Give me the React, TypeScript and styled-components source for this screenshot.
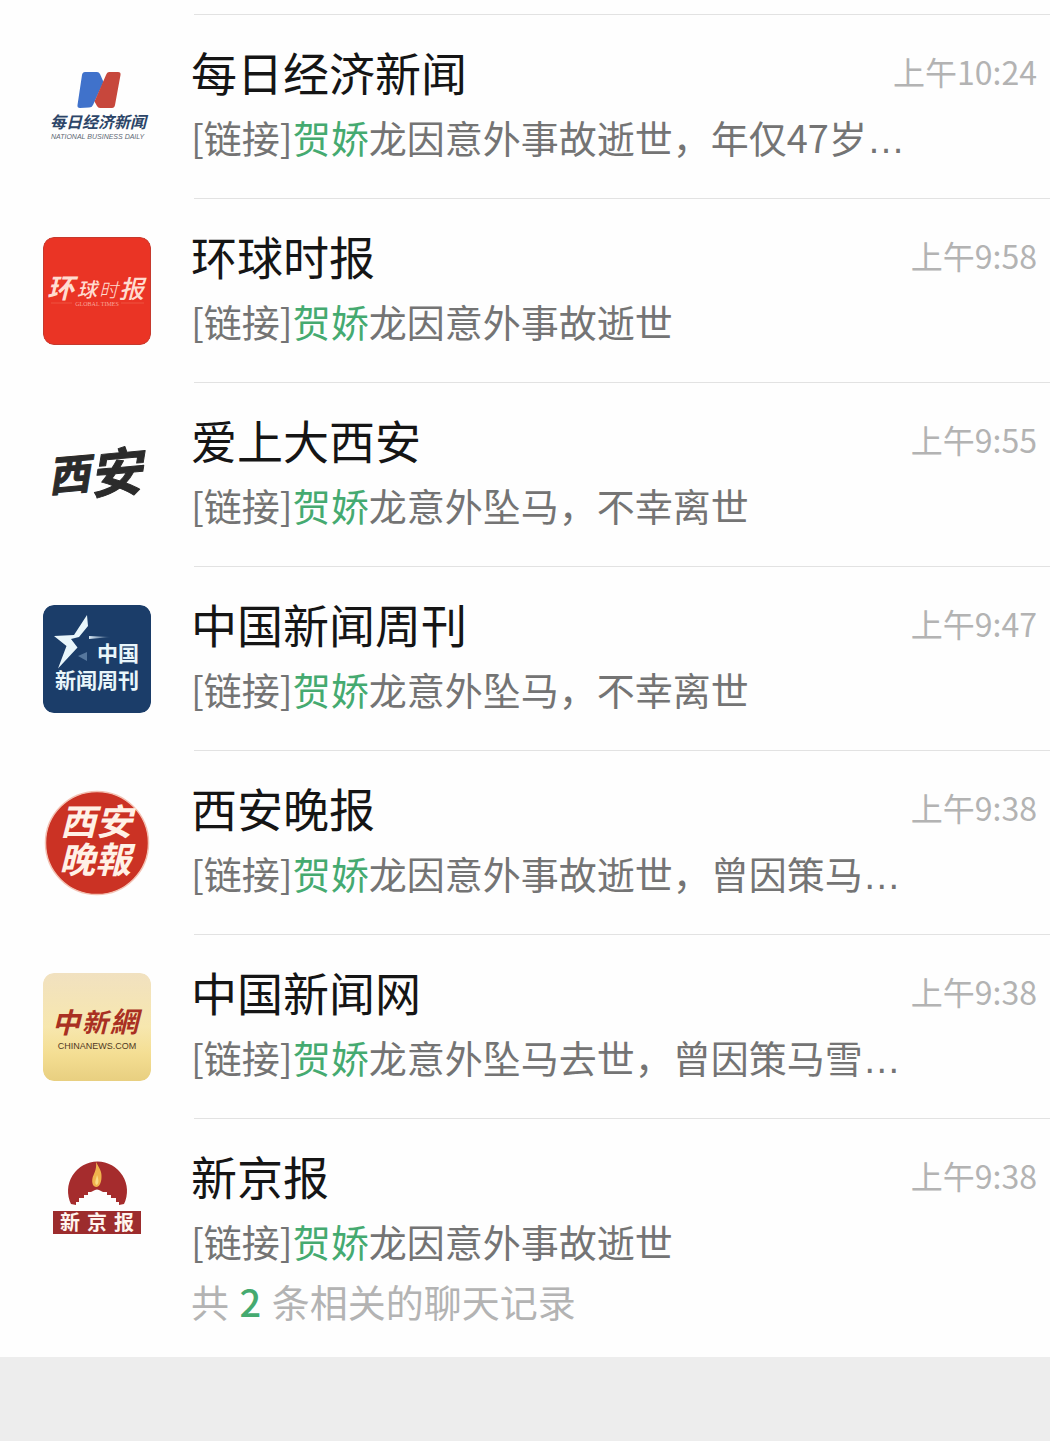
import React from "react";
import styled, { createGlobalStyle } from "styled-components";

const cjk = `"Noto Sans CJK SC", "Noto Sans", sans-serif`;

const GlobalStyle = createGlobalStyle`
  body {
    margin: 0;
    background: #ededed;
    font-family: ${cjk};
  }
`;

const Results = styled.ul`
  list-style: none;
  margin: 0;
  padding: 14px 0 0;
  background: #fefefe;
`;

const Row = styled.a`
  display: flex;
  padding-left: 43px;
  color: inherit;
  text-decoration: none;
`;

const Avatar = styled.svg`
  flex: none;
  width: 108px;
  height: 108px;
  margin-top: 39px;
  border-radius: 11px;
`;

const Body = styled.div<{ $tall?: boolean }>`
  flex: 1;
  min-width: 0;
  margin-left: 43px;
  padding: 28px 13px ${(p) => (p.$tall ? "34px" : "37px")} 0;
  border-top: 1px solid #e2e2e2;
  display: flex;
  flex-direction: column;
  gap: 14px;
`;

const Head = styled.div`
  display: flex;
  align-items: center;
  justify-content: space-between;
  gap: 24px;
  margin-left: -3px;
`;

const Title = styled.span`
  font-size: 46px;
  line-height: 56px;
  color: #151515;
`;

const Time = styled.time`
  flex: none;
  font-size: 32px;
  line-height: 48px;
  color: #b3b3b3;
`;

const Line = styled.span`
  margin-left: -3px;
  font-size: 38px;
  line-height: 48px;
  white-space: nowrap;
  color: #747474;
`;

const CountLine = styled(Line)`
  line-height: 44px;
  color: #b3b3b3;
`;

const Match = styled.em`
  font-style: normal;
  color: #45aa70;
`;

const Count = styled(Match)`
  margin: 0 2px;
  font-weight: 500;
`;

const Ellipsis = styled.span`
  font-family: "Liberation Sans", sans-serif;
  line-height: 1;
`;

const LogoText = styled.text<{ $latin?: "sans" | "serif" }>`
  font-family: ${(p) =>
    p.$latin === "serif"
      ? `"Liberation Serif", serif`
      : p.$latin === "sans"
        ? `"Liberation Sans", sans-serif`
        : cjk};
`;

function DailyEconomicLogo() {
  return (
    <Avatar viewBox="0 0 108 108" aria-hidden="true">
      <path d="M42 19H54Q56 19 57 21L60.500 29 50 52Q49 54.500 46 54.500L37 55Q34 55 34.500 52L39 22Q39.500 19 42 19Z" fill="#4072cb" />
      <path d="M66 19H75Q78 19 77.500 22L72 52Q71.500 55 69 55H57Q55 55 54 53L51.500 48.500 63 22Q64 19 66 19Z" fill="#c7473c" />
      <LogoText x="7" y="75" fontSize="16" fontWeight="700" fontStyle="italic" fill="#2c4568">每日经济新闻</LogoText>
      <LogoText $latin="sans" x="8" y="86" fontSize="7" fontStyle="italic" fill="#5d6774">NATIONAL BUSINESS DAILY</LogoText>
    </Avatar>
  );
}

function GlobalTimesLogo() {
  return (
    <Avatar viewBox="0 0 108 108" aria-hidden="true">
      <rect x="0.500" y="0.500" width="107" height="107" rx="10.500" fill="#ea3425" stroke="#c6392d" />
      <LogoText fill="#ffdcd0" fontStyle="italic" fontWeight="500">
        <tspan x="4" y="61" fontSize="27" fontWeight="700">环</tspan>
        <tspan x="34" y="60" fontSize="20">球</tspan>
        <tspan x="56" y="60" fontSize="19" fontWeight="300">时</tspan>
        <tspan x="76" y="61" fontSize="25">报</tspan>
      </LogoText>
      <path d="M8 66H29M78 66H101" stroke="#f0705f" strokeWidth="0.500" />
      <LogoText $latin="serif" x="54" y="69" fontSize="6" textAnchor="middle" fill="#f9a598">GLOBAL TIMES</LogoText>
    </Avatar>
  );
}

function XianLogo() {
  return (
    <Avatar viewBox="0 0 108 108" aria-hidden="true">
      <LogoText fill="#2b2b2b" stroke="#2b2b2b" strokeWidth="1" strokeLinejoin="round" fontStyle="italic" fontWeight="700">
        <tspan x="6" y="71" fontSize="42" rotate="-5">西</tspan>
        <tspan x="48" y="73" fontSize="52" rotate="-5">安</tspan>
      </LogoText>
    </Avatar>
  );
}

function NewsweekLogo() {
  return (
    <Avatar viewBox="0 0 108 108" aria-hidden="true">
      <defs>
        <linearGradient id="streak">
          <stop offset="0" stopColor="#dcecf8" />
          <stop offset="1" stopColor="#1b3d69" />
        </linearGradient>
      </defs>
      <rect width="108" height="108" rx="11" fill="#1b3d69" />
      <path d="M44 10 31 30 11 31 23.500 41 15 63.500 34.500 42.500 28 34 36 32 45 21Z" fill="#e9f6fb" />
      <path d="M46 31 68 32 46 34Z" fill="url(#streak)" />
      <path d="M35 51 44 47V56Z" fill="#6f90b4" opacity="0.700" />
      <LogoText fill="#e9f6fb" fontWeight="700" fontSize="21">
        <tspan x="54" y="56">中国</tspan>
        <tspan x="12" y="83">新闻周刊</tspan>
      </LogoText>
    </Avatar>
  );
}

function XianEveningLogo() {
  return (
    <Avatar viewBox="0 0 108 108" aria-hidden="true">
      <circle cx="54" cy="54" r="51.500" fill="#cb3224" stroke="#f3c2b4" strokeWidth="1.500" />
      <LogoText fill="#fff1e6" fontStyle="italic" fontWeight="700" fontSize="36">
        <tspan x="17" y="46">西安</tspan>
        <tspan x="16" y="84">晚報</tspan>
      </LogoText>
    </Avatar>
  );
}

function ChinaNewsLogo() {
  return (
    <Avatar viewBox="0 0 108 108" aria-hidden="true">
      <defs>
        <linearGradient id="gold" x2="0" y2="1">
          <stop offset="0" stopColor="#f1e1c0" />
          <stop offset="0.500" stopColor="#f7e7ae" />
          <stop offset="0.750" stopColor="#f4de93" />
          <stop offset="1" stopColor="#e8cf80" />
        </linearGradient>
      </defs>
      <rect width="108" height="108" rx="11" fill="url(#gold)" />
      <LogoText fill="#a93022" fontStyle="italic" fontWeight="700">
        <tspan x="9" y="60" fontSize="28">中</tspan>
        <tspan x="39" y="59" fontSize="26">新</tspan>
        <tspan x="67" y="59" fontSize="28">網</tspan>
      </LogoText>
      <LogoText $latin="sans" x="54" y="76" fontSize="9" textAnchor="middle" fill="#51391f">CHINANEWS.COM</LogoText>
    </Avatar>
  );
}

function BeijingNewsLogo() {
  return (
    <Avatar viewBox="0 0 108 108" aria-hidden="true">
      <path d="M28 47A29.500 29.500 0 1 1 81 47L76 48V45H73V41H68V38H64V35H60L58 34Q54 31 50 34L48 35H45V38H41V41H36V45H33V48Z" fill="#a52c2d" />
      <path d="M53 5C56 11 59 14 58.500 20 58.500 26 56 30 53.500 30 50 30 48.500 26 49.500 21 50.500 17 54 13 53 5Z" fill="#f0b44d" />
      <path d="M54 18C56 23 56 27 53.500 28 51 26 53 23 54 18Z" fill="#f9dc86" />
      <rect x="10" y="54" width="88" height="23" fill="#9c2c2d" />
      <LogoText fill="#fff4ee" fontWeight="700" fontSize="20" x="17 44 71" y="73">
        新京报
      </LogoText>
    </Avatar>
  );
}

type Item = {
  name: string;
  time: string;
  text: string;
  cut?: boolean;
  Logo: () => React.JSX.Element;
  count?: number;
};

const items: Item[] = [
  { name: "每日经济新闻", time: "10:24", text: "龙因意外事故逝世，年仅47岁", cut: true, Logo: DailyEconomicLogo },
  { name: "环球时报", time: "9:58", text: "龙因意外事故逝世", Logo: GlobalTimesLogo },
  { name: "爱上大西安", time: "9:55", text: "龙意外坠马，不幸离世", Logo: XianLogo },
  { name: "中国新闻周刊", time: "9:47", text: "龙意外坠马，不幸离世", Logo: NewsweekLogo },
  { name: "西安晚报", time: "9:38", text: "龙因意外事故逝世，曾因策马", cut: true, Logo: XianEveningLogo },
  { name: "中国新闻网", time: "9:38", text: "龙意外坠马去世，曾因策马雪", cut: true, Logo: ChinaNewsLogo },
  { name: "新京报", time: "9:38", text: "龙因意外事故逝世", Logo: BeijingNewsLogo, count: 2 },
];

export default function App() {
  return (
    <main lang="zh-CN">
      <GlobalStyle />
      <Results>
        {items.map(({ name, time, text, cut, Logo, count }) => (
          <li key={name}>
            <Row href="#">
              <Logo />
              <Body $tall={count !== undefined}>
                <Head>
                  <Title>{name}</Title>
                  <Time dateTime={time.padStart(5, "0")}>上午{time}</Time>
                </Head>
                <Line>
                  [链接]<Match>贺娇</Match>{text}
                  {cut && <Ellipsis>…</Ellipsis>}
                </Line>
                {count && (
                  <CountLine>
                    共 <Count>{count}</Count> 条相关的聊天记录
                  </CountLine>
                )}
              </Body>
            </Row>
          </li>
        ))}
      </Results>
    </main>
  );
}
